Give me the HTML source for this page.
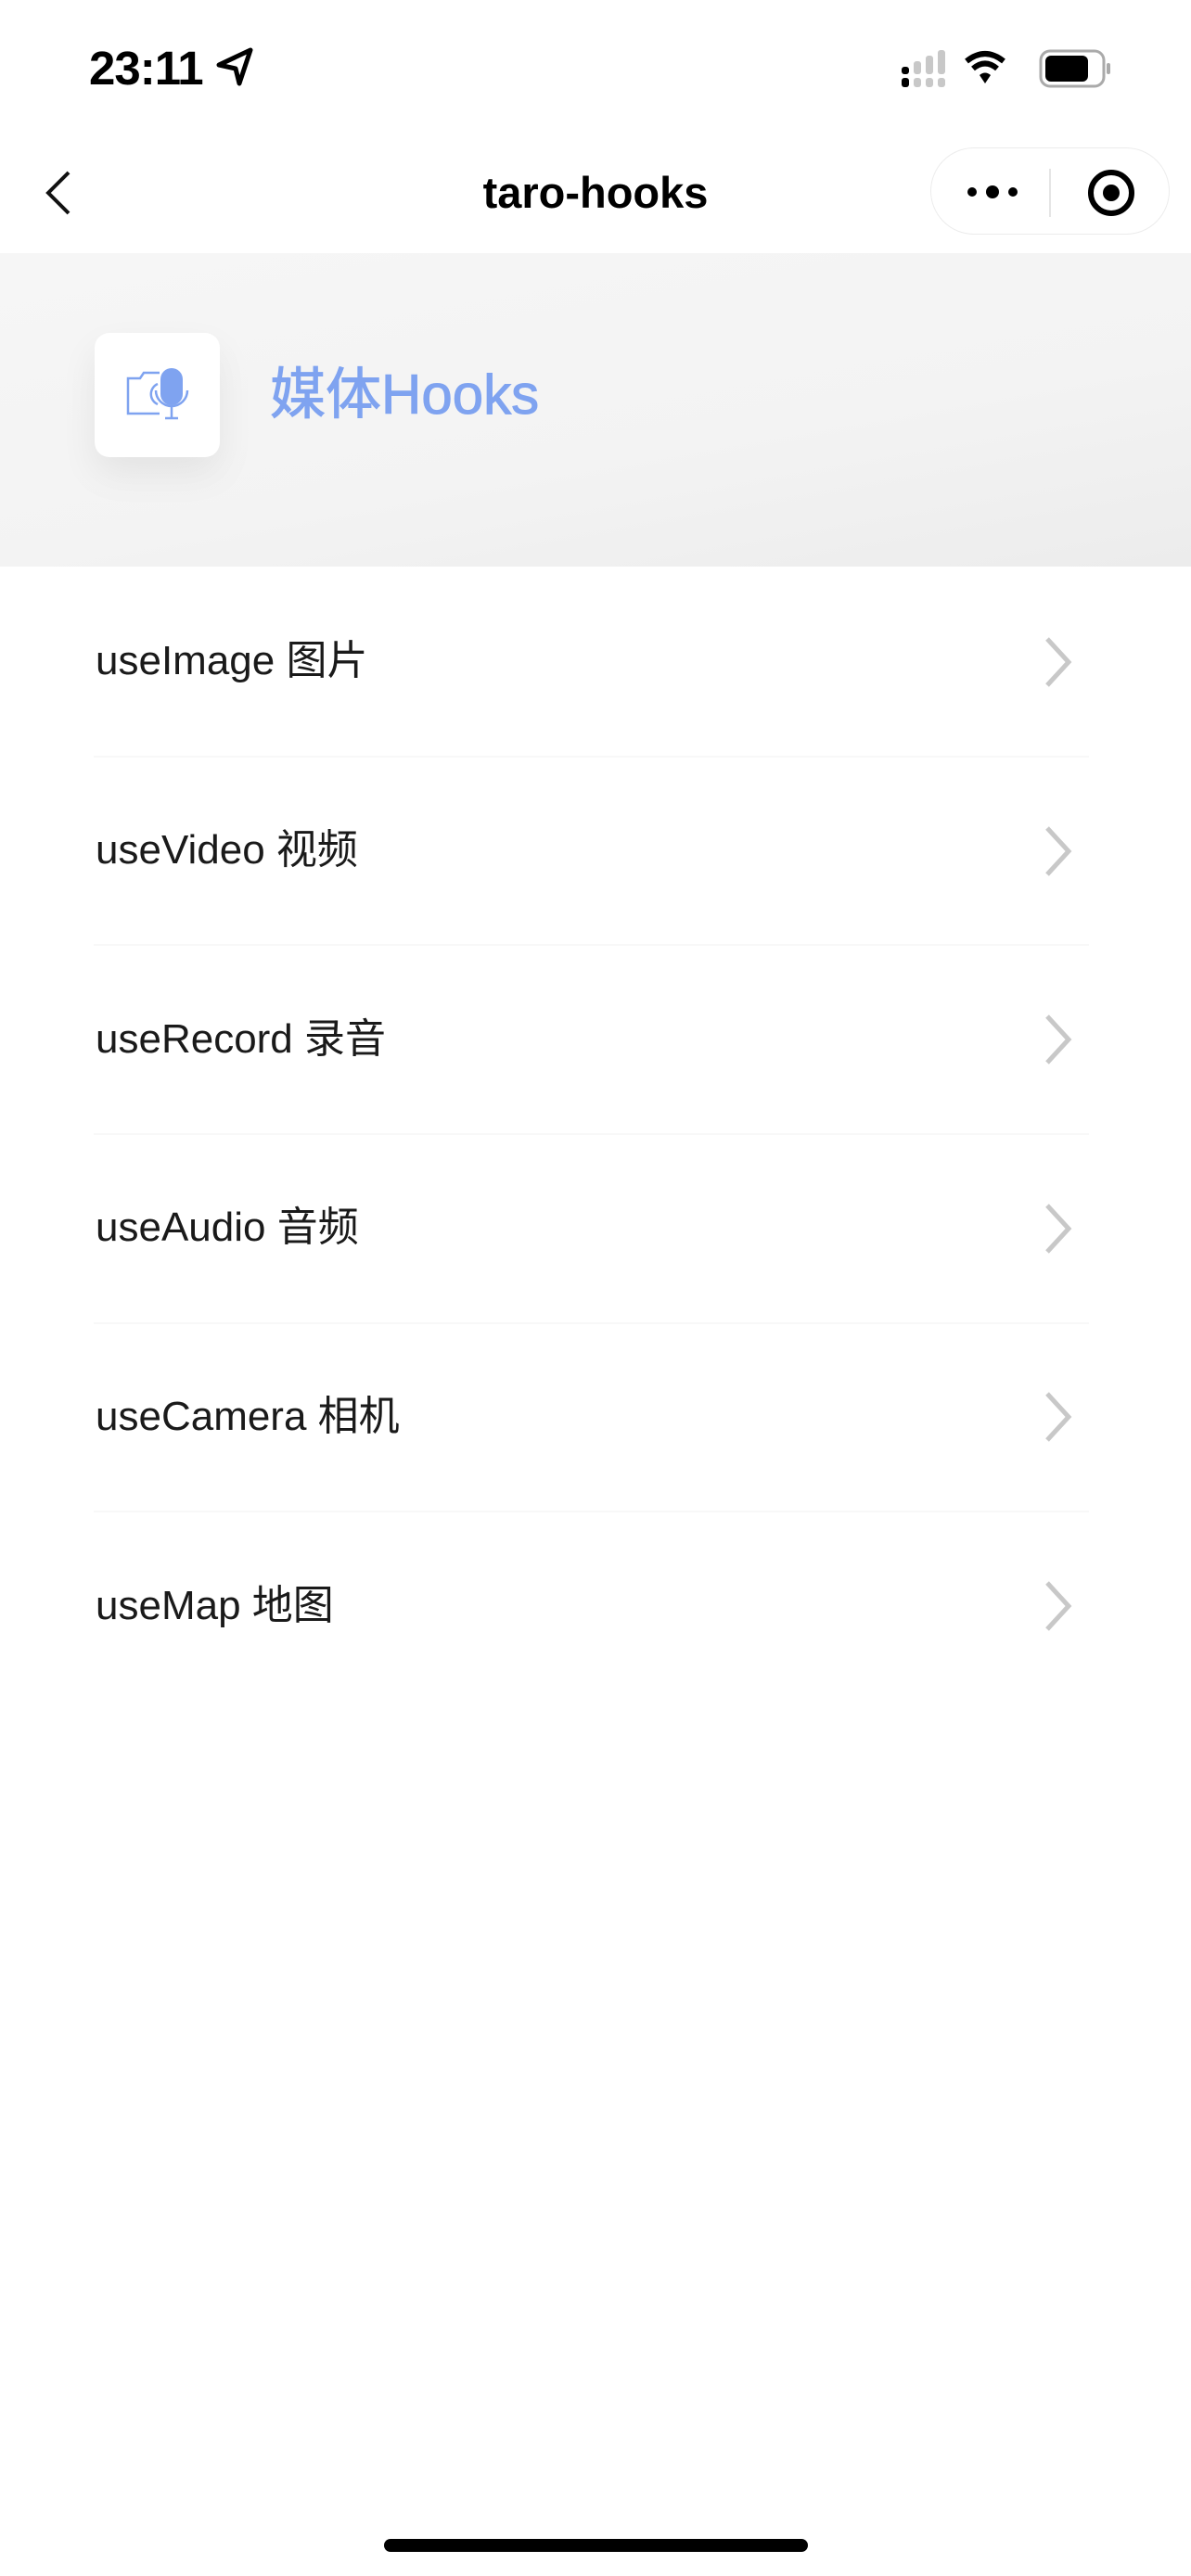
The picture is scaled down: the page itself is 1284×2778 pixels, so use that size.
<!DOCTYPE html>
<html><head><meta charset="utf-8"><style>
body{margin:0;width:1284px;height:2778px;background:#fff;position:relative;overflow:hidden;font-family:"Liberation Sans","Noto Sans CJK SC",sans-serif;}
.abs{position:absolute}
.row{position:absolute;left:103px;font-size:44px;color:#1a1a1a;line-height:1;}
.sep{position:absolute;left:101px;width:1073px;height:2px;background:#f8f8f8}
.chev{position:absolute;left:1124px;width:34px;height:56px}
</style></head><body>
<div class="abs" style="left:96px;top:44px;font-size:51px;font-weight:bold;color:#000;letter-spacing:-1px">23:11</div>
<svg class="abs" style="left:232px;top:48px" width="44" height="46" viewBox="0 0 44 46"><path d="M4 22 L38 6 L26 42 L22 26 Z" fill="none" stroke="#000" stroke-width="5" stroke-linejoin="round"/></svg>
<svg class="abs" style="left:970px;top:52px" width="240" height="44" viewBox="0 0 240 44">
<rect x="2" y="20" width="8" height="8" rx="3" fill="#000"/><rect x="2" y="32" width="8" height="10" rx="3" fill="#000"/>
<rect x="15" y="14" width="8" height="14" rx="3" fill="#c8c8c8"/><rect x="15" y="32" width="8" height="10" rx="3" fill="#c8c8c8"/>
<rect x="28" y="8" width="8" height="20" rx="3" fill="#c8c8c8"/><rect x="28" y="32" width="8" height="10" rx="3" fill="#c8c8c8"/>
<rect x="41" y="2" width="8" height="26" rx="3" fill="#c8c8c8"/><rect x="41" y="32" width="8" height="10" rx="3" fill="#c8c8c8"/>
<path d="M72 14 Q92 -2 112 14" stroke="#000" stroke-width="6" fill="none"/><path d="M79 22 Q92 11 105 22" stroke="#000" stroke-width="6" fill="none"/><path d="M86 29 L92 38 L98 29 Q92 24 86 29Z" fill="#000"/>
<rect x="152" y="3" width="68" height="38" rx="10" fill="none" stroke="#aaa" stroke-width="3"/><rect x="157" y="8" width="46" height="28" rx="6" fill="#000"/><rect x="223" y="16" width="4" height="12" rx="2" fill="#aaa"/>
</svg>
<svg class="abs" style="left:46px;top:182px" width="34" height="52" viewBox="0 0 34 52"><path d="M28 4 L6 26 L28 48" fill="none" stroke="#111" stroke-width="4"/></svg>
<div class="abs" style="left:0;width:1284px;top:180px;text-align:center;font-size:47px;font-weight:bold;color:#000">taro-hooks</div>
<div class="abs" style="left:1003px;top:159px;width:258px;height:94px;border:1.5px solid #ececec;border-radius:48px;box-sizing:border-box"></div>
<svg class="abs" style="left:1040px;top:193px" width="60" height="28"><circle cx="8" cy="14" r="5" fill="#000"/><circle cx="30" cy="14" r="7" fill="#000"/><circle cx="52" cy="14" r="5" fill="#000"/></svg>
<div class="abs" style="left:1131px;top:182px;width:2px;height:52px;background:#e5e5e5"></div>
<svg class="abs" style="left:1170px;top:180px" width="56" height="56"><circle cx="28" cy="28" r="22" fill="none" stroke="#000" stroke-width="6"/><circle cx="28" cy="28" r="9" fill="#000"/></svg>
<div class="abs" style="left:0;top:273px;width:1284px;height:338px;background:linear-gradient(170deg,#f6f6f6 0%,#f3f3f3 60%,#ececec 100%)"></div>
<div class="abs" style="left:102px;top:359px;width:135px;height:134px;background:#fff;border-radius:16px;box-shadow:0 18px 40px rgba(0,0,0,0.07)"></div>
<svg class="abs" style="left:130px;top:390px" width="80" height="70" viewBox="130 390 80 70">
<path d="M172 402 L155 402 L151 408 L138 408 L138 446 L172 446" fill="none" stroke="#7fa3f0" stroke-width="2.5"/>
<path d="M170 414 A12 12 0 0 0 170 436" fill="none" stroke="#7fa3f0" stroke-width="2.5"/>
<rect x="173" y="397" width="24" height="40" rx="12" fill="#7fa3f0"/>
<path d="M168 421 A17 17 0 0 0 202 421" fill="none" stroke="#7fa3f0" stroke-width="2.5"/>
<path d="M185 438 V450 M178 451 H192" stroke="#7fa3f0" stroke-width="2.5"/>
</svg>
<div class="abs" style="left:291px;top:396px;font-size:60px;color:#7fa3f0;line-height:1;-webkit-text-stroke:1px #7fa3f0">媒体Hooks</div>

<div class="row" style="top:691px">useImage 图片</div>
<div class="row" style="top:895px">useVideo 视频</div>
<div class="row" style="top:1099px">useRecord 录音</div>
<div class="row" style="top:1302px">useAudio 音频</div>
<div class="row" style="top:1506px">useCamera 相机</div>
<div class="row" style="top:1710px">useMap 地图</div>
<div class="sep" style="top:815px"></div>
<div class="sep" style="top:1018px"></div>
<div class="sep" style="top:1222px"></div>
<div class="sep" style="top:1426px"></div>
<div class="sep" style="top:1629px"></div>
<svg class="chev" style="top:686px" viewBox="0 0 34 56"><path d="M5 3 L28 28 L5 53" fill="none" stroke="#c8c8c8" stroke-width="5"/></svg>
<svg class="chev" style="top:890px" viewBox="0 0 34 56"><path d="M5 3 L28 28 L5 53" fill="none" stroke="#c8c8c8" stroke-width="5"/></svg>
<svg class="chev" style="top:1093px" viewBox="0 0 34 56"><path d="M5 3 L28 28 L5 53" fill="none" stroke="#c8c8c8" stroke-width="5"/></svg>
<svg class="chev" style="top:1297px" viewBox="0 0 34 56"><path d="M5 3 L28 28 L5 53" fill="none" stroke="#c8c8c8" stroke-width="5"/></svg>
<svg class="chev" style="top:1500px" viewBox="0 0 34 56"><path d="M5 3 L28 28 L5 53" fill="none" stroke="#c8c8c8" stroke-width="5"/></svg>
<svg class="chev" style="top:1704px" viewBox="0 0 34 56"><path d="M5 3 L28 28 L5 53" fill="none" stroke="#c8c8c8" stroke-width="5"/></svg>
<div class="abs" style="left:414px;top:2738px;width:457px;height:14px;border-radius:7px;background:#000"></div>
</body></html>
